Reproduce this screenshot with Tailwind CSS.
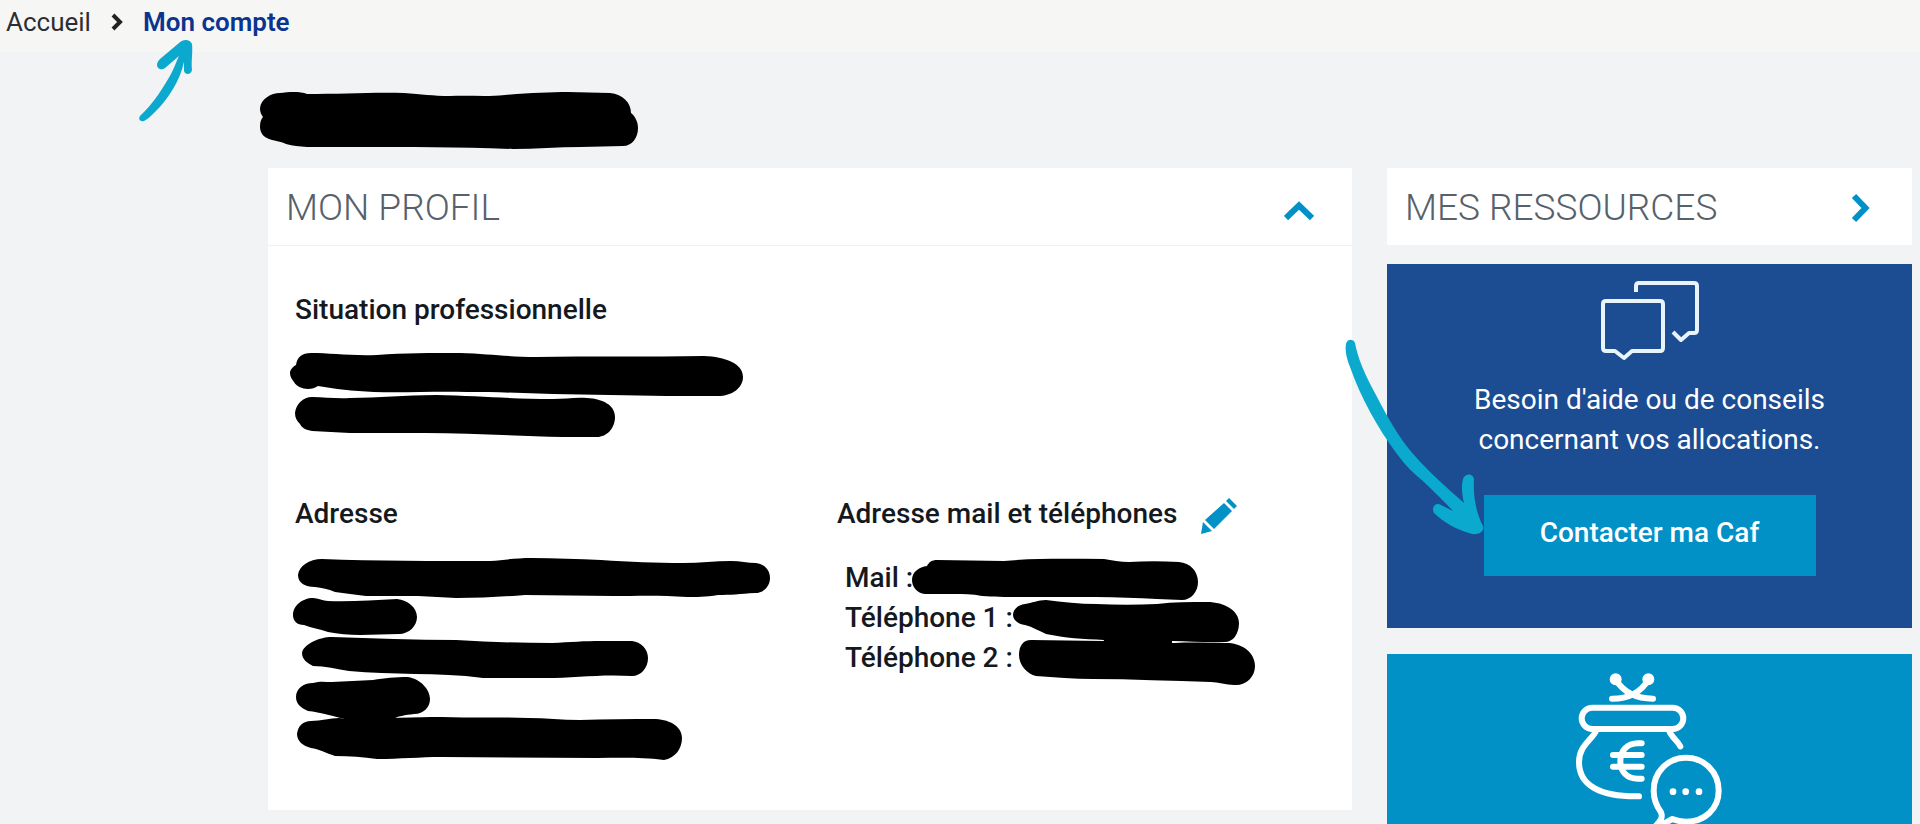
<!DOCTYPE html>
<html lang="fr">
<head>
  <meta charset="UTF-8">
  <meta name="viewport" content="width=device-width, initial-scale=1.0">
  <title>Mon compte</title>
  <script src="https://cdn.jsdelivr.net/npm/@tailwindcss/browser@4"></script>
</head>
<body class="h-screen overflow-hidden flex flex-col bg-[#f1f3f5] font-['Roboto',sans-serif] text-[#15191e]">

  <!-- Breadcrumb -->
  <nav class="relative bg-[#f6f7f5] h-[52px] px-1.5 pt-0.5 shrink-0" aria-label="Fil d'Ariane">
    <ol class="flex items-center text-[26px] leading-10">
      <li><a href="#" class="text-[#2b2f33]">Accueil</a></li>
      <li class="px-5" aria-hidden="true">
        <svg class="w-3 h-5" viewBox="0 0 12 20" fill="none" stroke="#222" stroke-width="4">
          <path d="M2 3L9 10L2 17" />
        </svg>
      </li>
      <li><a href="#" class="font-semibold text-[#0a3490]" aria-current="page">Mon compte</a></li>
    </ol>
    <svg class="absolute left-[136px] top-[38px] w-[60px] h-[86px]" viewBox="136 38 60 86" fill="#0aa9cd" aria-hidden="true">
      <path d="M140 116C153 104 164 87 172 72C175 66 177 60 179 56L165 68C161 71 157 68 157 65C157 63 158 61 160 59L179 43C183 39 190 39 192 44C193 51 191 62 192 70C191 75 185 75 184 71L184 62C180 81 168 99 155 112C151 116 148 119 144 121C140 122 138 119 140 116Z" />
    </svg>
  </nav>

  <main class="flex-1 min-h-0 flex flex-col pl-[268px] pr-2">

    <!-- Account holder -->
    <div class="pt-[39px] pb-[18px] -ml-[9px]">
      <svg class="w-[381px] h-[59px]" viewBox="259 91 381 59" aria-hidden="true">
        <path d="M260 108C261 99 271 93 280 93C288 92 300 91 307 94C340 94 375 92 404 93C422 94 432 96 450 96C470 95 485 97 505 95C530 93 550 92 568 92L610 93C623 94 631 103 631 113C636 117 638 123 638 128C638 138 632 146 623 146L581 147C558 147 535 149 513 149C460 147 410 147 358 147L307 147C299 146 293 146 286 144C280 141 275 141 269 139C263 137 260 132 260 127C260 122 261 119 263 117C261 114 260 112 260 108Z" />
      </svg>
    </div>

    <div class="flex-1 min-h-0 grid grid-cols-[minmax(0,1084fr)_minmax(0,525fr)] gap-x-[35px]">

      <!-- Profile -->
      <section class="self-start bg-white">
        <header class="flex items-center justify-between h-[78px] pt-0.5 pl-[18px] pr-[38px] border-b border-[#eef0f2]">
          <h2 class="text-[37px] leading-10 font-light text-[#56616b]">MON PROFIL</h2>
          <button type="button" class="pt-1.5" aria-label="Replier mon profil" aria-expanded="true">
            <svg class="w-[30px] h-5" viewBox="0 0 30 20" fill="none" stroke="#0191c7" stroke-width="6">
              <path d="M2 17L15 4.500L28 17" />
            </svg>
          </button>
        </header>

        <div class="pt-11 pb-12 text-[28px] leading-10">
          <div class="px-[27px]">
            <h3 class="font-medium">Situation professionnelle</h3>
            <svg class="mt-5 -ml-1.5 w-[455px] h-[90px]" viewBox="289 350 455 90" aria-hidden="true">
              <path d="M290 373C290 369 294 366 296 365C297 357 302 353 311 353C330 353 350 356 377 355C405 353 430 353 460 353C490 354 510 357 536 357C590 356 650 357 704 356C725 357 743 363 743 377C743 388 732 396 718 396L666 396C630 395 590 395 553 394C525 393 495 392 467 392C435 391 405 393 374 392C352 391 335 389 318 386C315 388 312 389 308 389C302 389 296 386 294 382C292 379 290 377 290 373Z" />
              <path d="M295 413C296 404 303 397 312 397C325 397 337 399 350 398C378 398 405 395 436 395C480 396 515 399 553 399C565 399 575 397 587 398C603 399 615 405 615 417C615 428 607 437 597 437L563 437C515 436 470 433 425 433L350 433C337 432 325 432 312 431C306 430 302 428 300 424C297 421 295 418 295 413Z" />
            </svg>
          </div>

          <div class="grid grid-cols-2 pt-[54px]">
            <div class="px-[27px]">
              <h3 class="font-medium">Adresse</h3>
              <svg class="mt-6 -ml-1 w-[480px] h-[204px]" viewBox="291 558 480 204" aria-hidden="true">
                <path d="M298 575C299 566 309 559 322 559C375 561 435 561 490 561C505 560 515 558 532 558C555 558 578 559 601 560C630 562 655 563 683 563C700 563 715 561 731 561C740 561 748 563 756 563C764 564 770 570 770 578C770 586 764 593 755 593C740 594 730 595 718 595C705 597 697 597 687 597C660 595 635 596 614 596L525 595C500 597 480 598 456 598L418 596L366 596C355 595 345 593 335 592C328 589 322 588 315 587C305 587 298 583 298 575Z" />
                <path d="M293 615C293 606 302 598 313 598C318 598 323 601 328 601C350 602 374 600 397 599C408 600 417 608 417 617C417 626 409 634 399 634L360 635C349 635 338 634 328 632C319 629 312 628 304 625C297 625 293 621 293 615Z" />
                <path d="M302 653C303 645 318 637 332 637C373 638 415 640 456 640C490 642 520 643 552 643C570 642 585 641 601 641L632 641C641 642 648 649 648 658C648 668 641 676 632 676C600 674 575 678 545 678L483 678C460 675 437 674 415 674C393 673 370 673 349 671C337 669 325 666 313 666C307 663 302 659 302 653Z" />
                <path d="M296 697C296 689 303 683 313 683C320 681 325 682 332 682L373 680C385 678 395 677 408 677C421 679 430 690 430 699C430 707 424 714 414 714C405 715 398 716 391 720L349 720C335 717 320 712 308 711C301 708 296 704 296 697Z" />
                <path d="M297 734C298 726 303 721 311 721C321 721 330 718 339 718L356 720C385 718 415 717 442 717C470 718 500 717 528 718C545 718 562 720 580 720C605 719 630 719 656 719C671 720 682 727 682 738C682 749 675 758 664 760C640 757 620 758 597 758L442 757C420 757 400 759 377 759C363 757 350 756 335 756C326 753 319 749 311 748C303 746 297 741 297 734Z" />
              </svg>
            </div>

            <div class="px-[27px]">
              <div class="flex items-center gap-6">
                <h3 class="font-medium">Adresse mail et téléphones</h3>
                <button type="button" class="pt-1" aria-label="Modifier l'adresse mail et les téléphones">
                  <svg class="w-9 h-9" viewBox="1202 498 36 36" fill="#0191c7">
                    <path d="M1230 498L1238 506L1235 509L1227 501Z" />
                    <path d="M1225 503L1233 511L1215 529L1206 520Z" />
                    <path d="M1204 522L1213 531L1202 534Z" />
                  </svg>
                </button>
              </div>
              <div class="relative mt-6 pl-2">
                <ul class="font-medium">
                  <li>Mail :</li>
                  <li>Téléphone 1 :</li>
                  <li>Téléphone 2 :</li>
                </ul>
                <svg class="absolute left-[74px] top-0 w-[345px] h-[128px]" viewBox="911 558 345 128" aria-hidden="true">
                  <path d="M912 580C912 572 919 567 927 566C929 562 932 560 937 560L1004 561C1037 558 1070 559 1104 559C1112 560 1120 562 1129 562C1145 561 1162 561 1179 562C1190 563 1198 571 1198 582C1198 592 1191 600 1182 600L1157 599C1137 598 1117 597 1096 597L1020 597C1005 597 995 597 982 596C972 594 963 594 954 594L925 594C917 593 912 587 912 580Z" />
                  <path d="M1013 615C1013 609 1018 605 1025 604C1032 603 1038 600 1046 600C1062 602 1080 604 1096 604C1116 605 1137 605 1157 604C1174 602 1190 602 1207 602C1225 602 1239 611 1239 623C1239 634 1233 642 1225 642C1207 643 1190 641 1172 641L1172 646L1102 646L1104 640C1083 639 1065 638 1046 634C1039 631 1033 627 1025 625C1018 624 1013 620 1013 615Z" />
                  <path d="M1019 655C1019 646 1023 640 1031 640L1103 641C1127 641 1150 643 1175 643C1193 642 1210 643 1229 643C1243 644 1255 653 1255 666C1255 677 1246 686 1234 685C1226 685 1218 682 1211 682C1172 681 1132 679 1093 679C1074 679 1055 677 1036 676C1027 674 1019 665 1019 655Z" />
                </svg>
              </div>
            </div>
          </div>
        </div>
      </section>

      <!-- Side column -->
      <aside class="min-h-0 flex flex-col">
        <a href="#" class="flex items-center justify-between h-[77px] shrink-0 pt-0.5 pl-[18px] pr-[42px] bg-white">
          <span class="text-[37px] leading-10 font-light text-[#56616b]">MES RESSOURCES</span>
          <svg class="w-5 h-[30px]" viewBox="0 0 20 30" fill="none" stroke="#0191c7" stroke-width="6" aria-hidden="true">
            <path d="M4 3L15.500 15L4 27" />
          </svg>
        </a>

        <section class="relative mt-[19px] shrink-0 flex flex-col items-center pt-4 pb-[52px] bg-[#1c4c92] text-white text-[28px] leading-10">
          <svg class="w-[100px] h-[82px]" viewBox="1600 280 100 82" fill="none" stroke="#e9f3fc" stroke-width="4" stroke-linejoin="round" aria-hidden="true">
            <path d="M1606 301H1660Q1663 301 1663 304V348Q1663 351 1660 351H1632L1624 358L1615 351H1606Q1603 351 1603 348V304Q1603 301 1606 301Z" />
            <path d="M1636 292V286Q1636 283 1639 283H1694Q1697 283 1697 286V330Q1697 333 1694 333H1689L1681 340L1673 332" />
          </svg>
          <p class="mt-[18px] text-center">Besoin d'aide ou de conseils<br>concernant vos allocations.</p>
          <button type="button" class="mt-[35px] w-[332px] pt-[18px] pb-[23px] bg-[#0191c7] font-medium">Contacter ma Caf</button>
          <svg class="absolute -left-[45px] top-[74px] w-[144px] h-[202px]" viewBox="1342 338 144 202" fill="#0aa9cd" aria-hidden="true">
            <path d="M1346 344C1347 339 1353 338 1355 343C1358 359 1365 375 1376 395C1386 414 1399 439 1415 456C1429 472 1446 487 1464 503C1462 494 1461 486 1463 479C1465 473 1473 473 1474 479C1473 497 1476 512 1483 526C1485 531 1479 535 1472 534C1457 530 1443 522 1434 513C1431 507 1436 502 1441 505L1453 511C1444 501 1434 492 1424 482C1414 474 1405 465 1397 454C1377 427 1361 398 1350 367C1346 357 1345 350 1346 344Z" />
          </svg>
        </section>

        <section class="mt-[26px] flex-1 min-h-0 overflow-hidden flex justify-center items-start pt-[18px] bg-[#0191c7]">
          <svg class="w-[154px] h-[170px] shrink-0" viewBox="100 65 462 510" fill="none" stroke="white" stroke-width="18" stroke-linecap="round" stroke-linejoin="round" aria-hidden="true">
            <path d="M228 88C245 115 275 145 340 145M326 88C310 115 282 145 217 145" />
            <circle cx="228" cy="87" r="9" />
            <circle cx="326" cy="87" r="9" />
            <rect x="126" y="172" width="305" height="64" rx="32" />
            <path d="M170 240C158 268 118 285 118 335C118 405 180 440 298 438" />
            <path d="M389 242C395 260 411 268 422 288" />
            <path d="M306 279H295C262 279 242 302 242 332C242 364 262 385 295 385H306M220 314H306M220 349H306" />
            <path d="M350 524C364 510 370 500 364 486C350 466 342 446 342 421C342 365 385 322 439 322C493 322 537 365 537 421C537 477 493 514 439 514C424 514 410 511 398 506C385 512 372 524 350 524Z" />
            <g fill="white" stroke="none">
              <circle cx="400" cy="424" r="10" />
              <circle cx="438" cy="424" r="10" />
              <circle cx="478" cy="424" r="10" />
            </g>
          </svg>
        </section>
      </aside>
    </div>
  </main>
</body>
</html>
